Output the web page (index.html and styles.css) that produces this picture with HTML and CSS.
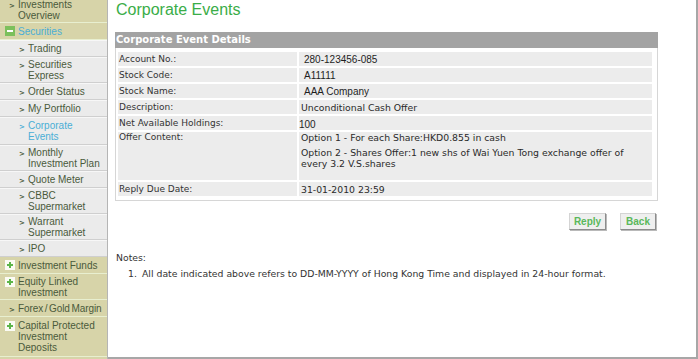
FILE: index.html
```html
<!DOCTYPE html>
<html lang="en">
  <head>
    <meta charset="UTF-8" />
    <meta name="viewport" content="width=device-width, initial-scale=1.0" />
    <title>Corporate Events</title>
    <link rel="stylesheet" href="styles.css">
  </head>
  <body>
    <div class="page">
      <aside class="menu">
        <div class="item top"><span class="txt lvl1"><span class="arr">&gt;</span>Investments<br>Overview</span></div>
        <div class="item top"><span class="ico"><svg width="10" height="10" viewBox="0 0 10 10"><rect width="10" height="10" fill="#7cc05c"/><rect x="2" y="4" width="6" height="2" fill="#fff"/></svg></span><span class="txt open">Securities</span></div>
        <div class="item sub"><span class="txt lvl2"><span class="arr">&gt;</span>Trading</span></div>
        <div class="item sub"><span class="txt lvl2"><span class="arr">&gt;</span>Securities<br>Express</span></div>
        <div class="item sub"><span class="txt lvl2"><span class="arr">&gt;</span>Order Status</span></div>
        <div class="item sub"><span class="txt lvl2"><span class="arr">&gt;</span>My Portfolio</span></div>
        <div class="item sub current"><span class="txt lvl2"><span class="arr">&gt;</span>Corporate<br>Events</span></div>
        <div class="item sub"><span class="txt lvl2"><span class="arr">&gt;</span>Monthly<br>Investment Plan</span></div>
        <div class="item sub"><span class="txt lvl2"><span class="arr">&gt;</span>Quote Meter</span></div>
        <div class="item sub"><span class="txt lvl2"><span class="arr">&gt;</span>CBBC<br>Supermarket</span></div>
        <div class="item sub"><span class="txt lvl2"><span class="arr">&gt;</span>Warrant<br>Supermarket</span></div>
        <div class="item sub"><span class="txt lvl2"><span class="arr">&gt;</span>IPO</span></div>
        <div class="item top"><span class="ico"><svg width="10" height="10" viewBox="0 0 10 10"><rect width="10" height="10" fill="#fbfbf4"/><rect x="2" y="4" width="6" height="2" fill="#5cb54a"/><rect x="4" y="2" width="2" height="6" fill="#5cb54a"/></svg></span><span class="txt">Investment Funds</span></div>
        <div class="item top"><span class="ico"><svg width="10" height="10" viewBox="0 0 10 10"><rect width="10" height="10" fill="#fbfbf4"/><rect x="2" y="4" width="6" height="2" fill="#5cb54a"/><rect x="4" y="2" width="2" height="6" fill="#5cb54a"/></svg></span><span class="txt">Equity Linked<br>Investment</span></div>
        <div class="item top"><span class="txt lvl1 tight"><span class="arr">&gt;</span>Forex / Gold Margin</span></div>
        <div class="item top three"><span class="ico"><svg width="10" height="10" viewBox="0 0 10 10"><rect width="10" height="10" fill="#fbfbf4"/><rect x="2" y="4" width="6" height="2" fill="#5cb54a"/><rect x="4" y="2" width="2" height="6" fill="#5cb54a"/></svg></span><span class="txt">Capital Protected<br>Investment<br>Deposits</span></div>
      </aside>

      <main class="main">
        <h1 class="title">Corporate Events</h1>
        <div class="panel">
          <h2 class="panel-head">Corporate Event Details</h2>
          <div class="panel-body">
            <table class="details">
              <tr><td class="k">Account No.:</td><td class="v num">280-123456-085</td></tr>
              <tr><td class="k">Stock Code:</td><td class="v num">A11111</td></tr>
              <tr><td class="k">Stock Name:</td><td class="v num">AAA Company</td></tr>
              <tr><td class="k">Description:</td><td class="v">Unconditional Cash Offer</td></tr>
              <tr><td class="k">Net Available Holdings:</td><td class="v num flush">100</td></tr>
              <tr class="tall">
                <td class="k">Offer Content:</td>
                <td class="v">
                  <p>Option 1 - For each Share:HKD0.855 in cash</p>
                  <p>Option 2 - Shares Offer:1 new shs of Wai Yuen Tong exchange offer of<br>every 3.2 V.S.shares</p>
                </td>
              </tr>
              <tr><td class="k">Reply Due Date:</td><td class="v">31-01-2010 23:59</td></tr>
            </table>
          </div>
        </div>

        <div class="actions">
          <button class="btn">Reply</button>
          <button class="btn">Back</button>
        </div>

        <div class="notes">
          <p>Notes:</p>
          <ol>
            <li><span class="n">1.</span>All date indicated above refers to DD-MM-YYYY of Hong Kong Time and displayed in 24-hour format.</li>
          </ol>
        </div>
      </main>
    </div>
  </body>
</html>
```

FILE: styles.css
```css
* {
  box-sizing: border-box;
  margin: 0;
  padding: 0;
}

html,
body {
  height: 100%;
  overflow: hidden;
  background: #fff;
}

body {
  font-family: "Liberation Sans", Arial, sans-serif;
}

.page {
  display: flex;
  height: 359px;
}

/* left menu */
.menu {
  width: 108px;
  flex: none;
  margin-top: -3px;
  border-right: 1px solid #b5b5b5;
  background: #d7d4a9;
  font-size: 10px;
  line-height: 11px;
  color: #4a5a3b;
}

.item {
  display: flex;
  align-items: center;
  min-height: 17px;
  padding: 2px 0 1px;
  white-space: nowrap;
}

.top {
  background: #d7d4a9;
  border-bottom: 1px solid #e8efd0;
}

.sub {
  background: #ebebeb;
  border-bottom: 1px solid #cfcfcf;
  box-shadow: inset 0 1px 0 #f7f7f7;
}

.current {
  padding: 3px 0 2px;
  color: #4aaed6;
}

.three {
  padding: 3px 0 3px;
}

.ico {
  display: flex;
  align-self: flex-start;
  margin: 1px 3px 0 5px;
}

.txt {
  display: block;
}

.lvl1 {
  padding-left: 18px;
  text-indent: -9px;
}

.lvl2 {
  padding-left: 28px;
  text-indent: -9px;
}

.tight {
  word-spacing: -1px;
  letter-spacing: -0.1px;
}

.arr {
  display: inline-block;
  width: 9px;
  text-indent: 0;
  word-spacing: 0;
  letter-spacing: 0;
  font-family: "DejaVu Sans", sans-serif;
  font-weight: bold;
  font-size: 7px;
  line-height: 1;
}

.open {
  color: #4aaed6;
}

/* main area */
.main {
  flex: 1;
  height: 359px;
  padding-left: 7px;
  border-right: 2px solid #a7a7a7;
  border-bottom: 2px solid #a7a7a7;
}

.title {
  font-size: 16px;
  line-height: 20px;
  font-weight: normal;
  color: #3aad48;
  padding-left: 1px;
  margin-bottom: 12px;
}

.panel {
  width: 543px;
}

.panel-head {
  height: 16px;
  line-height: 16px;
  background: #a3a3a3;
  color: #fff;
  font-family: "DejaVu Sans", sans-serif;
  font-size: 10px;
  font-weight: bold;
  padding-left: 1px;
}

.panel-body {
  border: 1px solid #d6d6d6;
  border-top: 0;
  padding: 2px 3px 2px 0;
}

.details {
  width: 100%;
  border-spacing: 2px;
  font-family: "DejaVu Sans", sans-serif;
  font-size: 9.3px;
  line-height: 11px;
  color: #2a2a2a;
}

.details td {
  height: 14px;
  background: #ececec;
  vertical-align: middle;
  padding: 0 0 0 2px;
}

.details .k {
  width: 179px;
  padding-left: 1px;
  font-size: 9px;
  color: #333;
}

.details .num {
  font-family: "Liberation Sans", Arial, sans-serif;
  font-size: 10px;
  padding-left: 5px;
  color: #1e1e1e;
}

.details .flush {
  padding: 2px 0 0 0;
}

.tall td {
  height: 48px;
  vertical-align: top;
}

.tall p {
  margin-bottom: 4px;
}

.actions {
  width: 543px;
  display: flex;
  justify-content: flex-end;
  gap: 14px;
  margin-top: 12px;
  padding-right: 2px;
}

.btn {
  width: 37px;
  height: 17px;
  background: #efefef;
  border: 1px solid #d4d4d4;
  border-right-color: #8c8c8c;
  border-bottom-color: #8c8c8c;
  box-shadow: 1px 1px 0 #b9b9b9;
  font-family: "Liberation Sans", Arial, sans-serif;
  font-size: 10px;
  font-weight: bold;
  color: #5ab85b;
}

.btn + .btn {
  width: 36px;
}

.notes {
  margin-top: 22px;
  padding-left: 1px;
  font-family: "DejaVu Sans", sans-serif;
  font-size: 9.3px;
  line-height: 11px;
  color: #333;
}

.notes ol {
  list-style: none;
  margin-top: 5px;
}

.notes li {
  display: flex;
  padding-left: 12px;
}

.notes .n {
  width: 14px;
  flex: none;
}
```
